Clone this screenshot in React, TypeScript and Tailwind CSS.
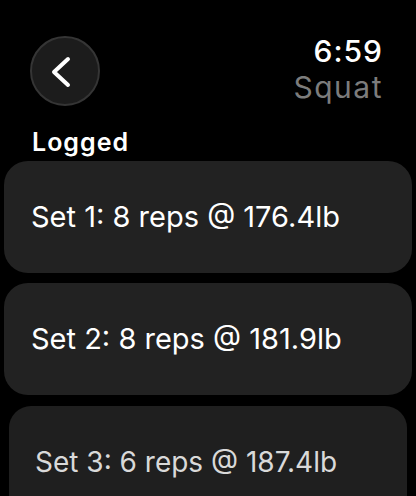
import { ReactNode } from "react";

interface LoggedSet {
  index: number;
  reps: number;
  weight: string;
}

const sets: LoggedSet[] = [
  { index: 1, reps: 8, weight: "176.4" },
  { index: 2, reps: 8, weight: "181.9" },
  { index: 3, reps: 6, weight: "187.4" },
];

function BackButton() {
  return (
    <button
      aria-label="Back"
      className="mt-[3px] flex h-[70px] w-[70px] items-center justify-center rounded-full border-2 border-[#353535] bg-[#1c1c1c]"
    >
      <svg width="66" height="66" viewBox="0 0 66 66" fill="none">
        <polyline
          points="36 21 22 34 36 47"
          stroke="#ffffff"
          strokeWidth="4"
          strokeLinecap="round"
          strokeLinejoin="round"
        />
      </svg>
    </button>
  );
}

function Card({ children, last }: { children: ReactNode; last?: boolean }) {
  // the bottom row shrinks a bit like the watch list scroll effect
  return last ? (
    <div className="mx-[9px] mt-[11px] flex h-[112px] items-center rounded-[22px] bg-[#1f1f1f] pl-[26px] text-[28px] text-[#d9d9d9]">
      {children}
    </div>
  ) : (
    <div className="mx-[4px] mb-[10px] flex h-[112px] items-center rounded-[24px] bg-[#222222] pl-[27px] text-[29px] text-white">
      {children}
    </div>
  );
}

export default function App() {
  return (
    <div
      className="h-[496px] w-[416px] overflow-hidden bg-black"
      style={{ fontFamily: "Inter, 'Noto Sans', sans-serif" }}
    >
      {/* header */}
      <div className="flex items-start justify-between pl-[30px] pr-[33px] pt-[33px]">
        <BackButton />
        <div className="flex flex-col items-end">
          <span className="text-[30px] font-medium leading-[36px] tracking-[1px] text-white">6:59</span>
          <span className="text-[30px] leading-[36px] tracking-[1.5px] text-[#7c7c7c]">Squat</span>
        </div>
      </div>

      <div className="mt-[21px] pl-[32px] text-[25px] font-semibold leading-[30px] tracking-[1px] text-white">
        Logged
      </div>

      <div className="mt-[4px]">
        {sets.map((s, i) => (
          <Card key={s.index} last={i === sets.length - 1}>
            Set {s.index}: {s.reps} reps @ {s.weight}lb
          </Card>
        ))}
      </div>
    </div>
  );
}
